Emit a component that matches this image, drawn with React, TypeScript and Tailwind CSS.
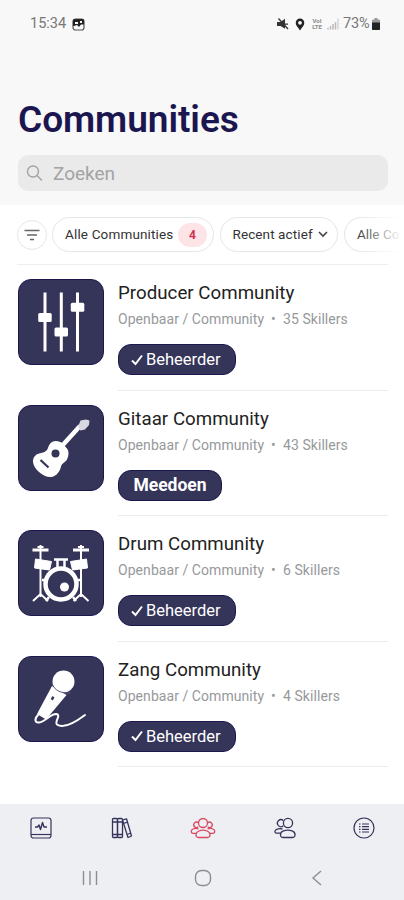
import type { ReactNode } from "react";

const communities = [
  { icon: <FadersIcon />, name: "Producer Community", skillers: 35, admin: true },
  { icon: <GuitarIcon />, name: "Gitaar Community", skillers: 43, admin: false },
  { icon: <DrumIcon />, name: "Drum Community", skillers: 6, admin: true },
  { icon: <MicIcon />, name: "Zang Community", skillers: 4, admin: true },
];

export default function App() {
  return (
    <div className="flex h-[900px] w-[404px] flex-col overflow-hidden bg-white font-[Roboto,sans-serif] text-black">
      <header className="h-[205px] shrink-0 bg-[#f8f8f8]">
        <StatusBar />
        <h1 className="mt-[52px] pl-[18px] text-[37px] leading-[44px] font-semibold tracking-[-0.05px] text-[#1b1650]">
          Communities
        </h1>
        <div className="mt-[13px] ml-[18px] flex h-[36px] w-[370px] items-center rounded-[10px] bg-[#eaeaea] pl-[8px] text-[#a3a3a3]">
          <SearchIcon />
          <span className="ml-[10px] pt-px text-[19px] leading-none">Zoeken</span>
        </div>
      </header>

      <Filters />

      <main className="flex-1">
        {communities.map((c) => (
          <CommunityRow key={c.name} {...c} />
        ))}
      </main>

      <TabBar />
    </div>
  );
}

function StatusBar() {
  return (
    <div className="flex h-[46px] items-center pt-[2px] pl-[30px] text-[14.5px] leading-none text-[#777]">
      <span className="w-[42px]">15:34</span>
      <svg width="13" height="13" viewBox="0 0 13 13" aria-hidden="true">
        <rect x="1" y="1" width="11" height="11" rx="2.5" fill="none" stroke="#555" strokeWidth="1.2" />
        <path d="M1 3a2 2 0 0 1 2-2h7a2 2 0 0 1 2 2v3.500H9L7 9 5 7 2 8H1z" fill="#222" />
        <path d="M3 4h3v2H3zM8 3h2v2H8z" fill="#f8f8f8" />
      </svg>
      <div className="ml-auto flex w-[127px] items-center">
        <svg width="12" height="12" viewBox="0 0 12 12" aria-hidden="true">
          <path d="M0 4h3.500L8 .8v10L3.500 8H0z" fill="#333" />
          <path d="M1.5.5l9.500 10.500M8 6.200h3" stroke="#333" strokeWidth="1.3" />
        </svg>
        <svg className="ml-[6px]" width="10" height="13" viewBox="0 0 10 13" aria-hidden="true">
          <path d="M5 12.500C3 9.500.7 7.500.7 4.800a4.300 4.300 0 0 1 8.600 0C9.300 7.500 7 9.500 5 12.500z" fill="#222" />
          <circle cx="5" cy="4.800" r="1.900" fill="#f8f8f8" />
        </svg>
        <div className="ml-[6px] flex w-[12px] flex-col items-center text-[6px] leading-[6px] font-bold text-[#888]">
          <span>VoI</span>
          <span>LTE</span>
        </div>
        <svg className="ml-[4px]" width="12" height="12" viewBox="0 0 12 12" aria-hidden="true">
          <path d="M1 11.500v-1.500M3.500 11.500V8M6 11.500V6M8.500 11.500V4" stroke="#bbb" strokeWidth="1.5" />
          <path d="M11 11.500V.5" stroke="#ccc" strokeWidth="1.2" />
        </svg>
        <span className="ml-[4px] w-[29px] text-[14.5px] tracking-[-0.2px]">73%</span>
        <svg width="8" height="12" viewBox="0 0 8 12" aria-hidden="true">
          <path d="M2.500 0h3v1.500H7A1 1 0 0 1 8 2.500v8.500a1 1 0 0 1-1 1H1a1 1 0 0 1-1-1V2.500a1 1 0 0 1 1-1h1.500z" fill="#999" />
          <path d="M0 4.500h8V11a1 1 0 0 1-1 1H1a1 1 0 0 1-1-1z" fill="#222" />
        </svg>
      </div>
    </div>
  );
}

function Filters() {
  return (
    <div className="relative h-[60px] shrink-0 overflow-hidden pt-[12px]">
      <div className="flex items-center gap-[6px] pl-[17px] text-[13.5px] leading-none text-[#333]">
        <button className="mr-[-1px] flex size-[30px] shrink-0 items-center justify-center rounded-full border border-[#e6e6e6]">
          <svg width="16" height="12" viewBox="0 0 16 12" aria-hidden="true">
            <path d="M.5 1.500h15M3 6h10M6 10.500h4" stroke="#666" strokeWidth="1.5" />
          </svg>
        </button>
        <button className="flex h-[35px] w-[162px] shrink-0 items-center rounded-full border border-[#e6e6e6] pl-[12px] tracking-[0.15px]">
          <span className="w-[113px] text-left whitespace-nowrap">Alle Communities</span>
          <span className="flex h-[24px] w-[29px] items-center justify-center rounded-full bg-[#fde4e7] text-[12px] font-bold text-[#d2304f]">
            4
          </span>
        </button>
        <button className="flex h-[35px] w-[118px] shrink-0 items-center rounded-full border border-[#e6e6e6] pl-[11.5px]">
          <span className="w-[85px] text-left tracking-[0.1px] whitespace-nowrap">Recent actief</span>
          <svg width="10" height="7" viewBox="0 0 10 7" aria-hidden="true">
            <path d="M1 1l4 4 4-4" fill="none" stroke="#444" strokeWidth="1.6" />
          </svg>
        </button>
        <div className="flex h-[35px] w-[60px] shrink-0 items-center rounded-l-full border border-r-0 border-[#e6e6e6] pl-[12px] whitespace-nowrap">
          Alle Co
        </div>
      </div>
      <div className="absolute top-0 right-0 h-full w-[48px] bg-linear-to-r from-transparent to-white to-95%" />
      <div className="absolute right-[16px] bottom-0 left-[17px] h-px bg-[#efefef]" />
    </div>
  );
}

function CommunityRow({
  icon,
  name,
  skillers,
  admin,
}: {
  icon: ReactNode;
  name: string;
  skillers: number;
  admin: boolean;
}) {
  return (
    <article className="flex h-[125.5px] pl-[17.5px]">
      <div className="mt-[14.4px] size-[86px] shrink-0 overflow-hidden rounded-[13px] border border-[#1c174d] bg-[#353459]">
        {icon}
      </div>
      <div className="mr-[16px] ml-[14.5px] flex-1 border-b border-[#ececec] pt-[16px]">
        <h2 className="text-[18.7px] leading-[24px] tracking-[0.03px] text-[#222]">{name}</h2>
        <p className="mt-[5px] flex text-[14px] leading-[18px] tracking-[0.06px] whitespace-nowrap text-[#96999b]">
          <span className="w-[153px]">Openbaar / Community</span>
          <span className="w-[12px]">•</span>
          <span>{skillers} Skillers</span>
        </p>
        {admin ? (
          <button className="mt-[16px] flex h-[31px] w-[118px] items-center rounded-[13px] border border-[#1c174d] bg-[#353459] pt-[2px] pl-[12px] text-[16.5px] leading-none text-white">
            <svg className="mr-[3px] mb-[2px]" width="12" height="12" viewBox="0 0 12 12" aria-hidden="true">
              <path d="M1 6.500l3.500 3.500L11 1.500" fill="none" stroke="currentColor" strokeWidth="2" />
            </svg>
            Beheerder
          </button>
        ) : (
          <button className="mt-[16px] h-[31px] w-[104px] rounded-[13px] border border-[#1c174d] bg-[#353459] pt-[2px] text-[17.5px] leading-none font-bold text-white">
            Meedoen
          </button>
        )}
      </div>
    </article>
  );
}

function TabBar() {
  return (
    <nav className="h-[96px] shrink-0 bg-[#eeeff3] text-[#36345c]">
      <div className="flex h-[48px] items-center justify-between pr-[29px] pl-[30px]">
        <ActivityIcon />
        <BooksIcon />
        <GroupIcon />
        <FriendsIcon />
        <ListIcon />
      </div>
      <div className="flex h-[51px] items-center justify-between pr-[81px] pl-[82px] text-[#8d8e92]">
        <svg width="16" height="16" viewBox="0 0 16 16" fill="none" stroke="currentColor" strokeWidth="1.4" aria-hidden="true">
          <path d="M1.500 1v14M8 1v14M14.500 1v14" />
        </svg>
        <svg className="mr-[3px]" width="18" height="18" viewBox="0 0 18 18" fill="none" stroke="currentColor" strokeWidth="1.4" aria-hidden="true">
          <rect x="1.5" y="1.5" width="15" height="15" rx="6" />
        </svg>
        <svg width="12" height="16" viewBox="0 0 12 16" fill="none" stroke="currentColor" strokeWidth="1.4" aria-hidden="true">
          <path d="M10 1L2 8l8 7" />
        </svg>
      </div>
    </nav>
  );
}

function SearchIcon() {
  return (
    <svg width="17" height="17" viewBox="0 0 17 17" fill="none" stroke="currentColor" strokeWidth="1.4" aria-hidden="true">
      <circle cx="7" cy="6.500" r="5.500" />
      <path d="M11 10.500l5 5" />
    </svg>
  );
}

function ActivityIcon() {
  return (
    <svg width="22" height="22" viewBox="0 0 22 22" fill="none" stroke="currentColor" strokeWidth="1.2" aria-hidden="true">
      <rect x="1" y="1" width="20" height="20" rx="2.5" />
      <path d="M1 17.500h20" />
      <path d="M5 10h2.500l1.500-2 1.500 4.500 2-7 1.500 4.500H17" strokeWidth="1.4" strokeLinejoin="round" />
    </svg>
  );
}

function BooksIcon() {
  return (
    <svg className="ml-[2px]" width="22" height="22" viewBox="0 0 22 22" fill="none" stroke="currentColor" strokeWidth="1.3" aria-hidden="true">
      <rect x="1.5" y="1.5" width="5" height="19" rx="1" />
      <rect x="6.5" y="1.5" width="5" height="19" rx="1" />
      <path d="M1.500 5h10M1.500 17.500h10" />
      <path d="M11.500 3l4-1.200 5 17.200-3.500 1.500zM12.500 6.500l4-1.300M16 17.500l4-1.500" strokeLinejoin="round" />
    </svg>
  );
}

function GroupIcon() {
  return (
    <svg className="mr-[2px]" width="26" height="22" viewBox="0 0 26 22" fill="none" stroke="#db4960" strokeWidth="1.3" aria-hidden="true">
      <circle cx="13" cy="6" r="4.500" />
      <path d="M8.500 20.500c-3.500 0-3.500-5 .5-6.500 2-.8 6-.8 8 0 4 1.500 4 6.500.5 6.500z" />
      <path d="M8.300 5.800a2.700 2.700 0 1 0 0 4M17.700 5.800a2.700 2.700 0 1 1 0 4" />
      <path d="M8.500 12C5 10.500 1.300 12 1.200 14.500c0 1 .5 1.800 1.800 1.800h3.200M17.500 12c3.500-1.500 7.200 0 7.300 2.500 0 1-.5 1.800-1.800 1.800h-3.200" />
    </svg>
  );
}

function FriendsIcon() {
  return (
    <svg width="22" height="22" viewBox="0 0 22 22" fill="none" stroke="currentColor" strokeWidth="1.3" aria-hidden="true">
      <circle cx="14" cy="6" r="4.600" />
      <path d="M9 20.500c-3.500 0-3.500-5.500.5-6.700 2.500-.7 6-.7 8.500 0 4 1.200 4 6.700.5 6.700z" />
      <path d="M9.300 3.600a3.500 3.500 0 1 0 0 5.200" />
      <path d="M8.500 12C4.500 11 1 12.200.9 14.500c0 1 .6 1.700 1.600 1.700h3.700" />
    </svg>
  );
}

function ListIcon() {
  return (
    <svg width="22" height="22" viewBox="0 0 22 22" fill="none" stroke="currentColor" strokeWidth="1.2" aria-hidden="true">
      <circle cx="11" cy="11" r="10" />
      <path d="M6 7h1.500M6 9.700h1.500M6 12.300h1.500M6 15h1.500M9 7h7M9 9.700h7M9 12.300h7M9 15h7" />
    </svg>
  );
}

function FadersIcon() {
  return (
    <svg className="size-full" viewBox="0 0 84 84" fill="#fff" aria-hidden="true">
      <path d="M24.500 12.500h3v59h-3zM40.800 12.500h3v59h-3zM57 12.500h3v59h-3z" />
      <rect x="19.200" y="33" width="13.500" height="9" rx="1.500" />
      <rect x="35.500" y="47.500" width="13.500" height="9" rx="1.500" />
      <rect x="51.800" y="22.800" width="13.500" height="9" rx="1.500" />
    </svg>
  );
}

function GuitarIcon() {
  return (
    <svg className="size-full" viewBox="0 0 84 84" aria-hidden="true">
      <path d="M42 41l19-21" stroke="#fff" strokeWidth="4.5" />
      <path d="M59 21l2.500-6.500L67 13.500l3.500 1-.5 4.500-4 4.500-4.500 1z" fill="#d9d9e2" />
      <path
        d="M33 36c3-2 7-1 9.500.5l5.500 6c2.500 3.500 1.500 7.500 0 11-1.500 3-5 3.500-6 7-1 4.500-4 9.500-9.500 10.500-7.500 1-18-8-18.500-15-.3-4.500 2.500-7.500 6-8.500 4-1 7.500-1.500 9-5.500.8-2.500 1.500-4.500 4-6z"
        fill="#fff"
      />
      <circle cx="36.500" cy="47.500" r="4" fill="#353459" />
      <path d="M21.500 54l8 7.500" stroke="#353459" strokeWidth="2.2" />
    </svg>
  );
}

function DrumIcon() {
  return (
    <svg className="size-full" viewBox="0 0 84 84" fill="none" stroke="#fff" aria-hidden="true">
      <path d="M13.500 19h16M54 19h16" strokeWidth="3" />
      <path d="M21.500 14v52M62 14v52M18.500 16h6M59 16h6" strokeWidth="2" />
      <path d="M14 70l7.500-7 7.500 7M54.500 70l7.500-7 7.500 7" strokeWidth="2" />
      <path d="M16.500 28l16 2.500-2 8.500-15-2zM67.500 28l-16 2.500 2 8.500 15-2z" fill="#fff" strokeLinejoin="round" />
      <path d="M35 28.500h14M38.500 29v8M45.500 29v8" strokeWidth="2.5" />
      <circle cx="42" cy="53" r="15.500" strokeWidth="4.5" />
      <circle cx="45.500" cy="56" r="4.500" fill="#fff" stroke="none" />
      <path d="M23 49h4M57 49h4M30 66l-3 4M54 66l3 4" strokeWidth="2.5" />
    </svg>
  );
}

function MicIcon() {
  return (
    <svg className="size-full" viewBox="0 0 84 84" aria-hidden="true">
      <path d="M33 29l14.500 9L27 62.500 18 57z" fill="#fff" />
      <circle cx="44.500" cy="24.500" r="11" fill="#fff" />
      <path d="M33 26.500c2 6.500 9.500 10.500 18.500 9.500" fill="none" stroke="#55547a" strokeWidth="1" />
      <path d="M33.500 39l2 1.500-1.800 3-2-1.500z" fill="#353459" />
      <path
        d="M19 58c-4 4-3 8 1 7.500 7-1 11-8.500 17-8.500 6 .5-2 8 1 10.500 6 4.500 18-2 28-9.500"
        fill="none"
        stroke="#fff"
        strokeWidth="2"
        strokeLinecap="round"
      />
    </svg>
  );
}
